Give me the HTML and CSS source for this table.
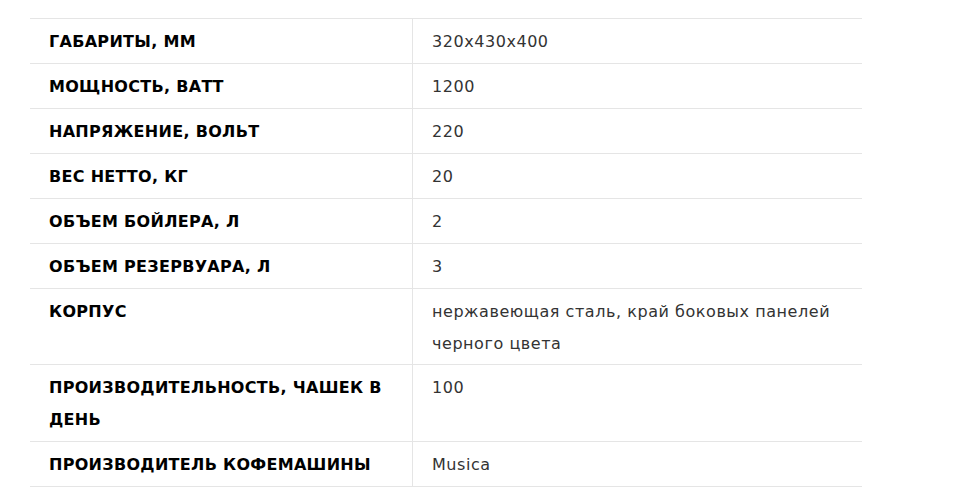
FILE: index.html
```html
<!DOCTYPE html>
<html lang="ru">
<head>
<meta charset="utf-8">
<link rel="stylesheet" href="styles.css">
</head>
<body>
<div class="wrap">
<table class="specs">
<tbody>
<tr><th>Габариты, мм</th><td>320x430x400</td></tr>
<tr><th>Мощность, ватт</th><td>1200</td></tr>
<tr><th>Напряжение, вольт</th><td>220</td></tr>
<tr><th>Вес нетто, кг</th><td>20</td></tr>
<tr><th>Объем бойлера, л</th><td>2</td></tr>
<tr><th>Объем резервуара, л</th><td>3</td></tr>
<tr class="tight"><th>Корпус</th><td>нержавеющая сталь, край боковых панелей черного цвета</td></tr>
<tr><th>Производительность, чашек в день</th><td>100</td></tr>
<tr><th>Производитель кофемашины</th><td>Musica</td></tr>
</tbody>
</table>
</div>
</body>
</html>
```

FILE: styles.css
```css
html, body {
  margin: 0;
  padding: 0;
  background: #fff;
}
.wrap {
  padding: 18px 0 0 30px;
}
.specs {
  width: 832px;
  border-collapse: collapse;
  table-layout: fixed;
  font-family: "DejaVu Sans", sans-serif;
  font-size: 16px;
  line-height: 32px;
}
.specs tr {
  border-top: 1px solid #e5e5e5;
  border-bottom: 1px solid #e5e5e5;
}
.specs th, .specs td {
  text-align: left;
  vertical-align: top;
  padding: 7px 20px 5px 19px;
}
.specs .tight th, .specs .tight td {
  padding-bottom: 4px;
}
.specs th {
  width: 343px;
  text-transform: uppercase;
  font-weight: 700;
  letter-spacing: 0.3px;
  color: #000;
  border-right: 1px solid #e5e5e5;
}
.specs td {
  color: #333;
  font-weight: 400;
  letter-spacing: 0.55px;
}
```
